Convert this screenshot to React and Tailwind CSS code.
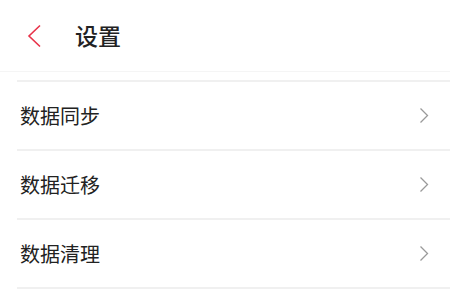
import React from 'react';

const items = ['数据同步', '数据迁移', '数据清理'];

const ChevronRight = () => (
  <svg width="10" height="17" viewBox="0 0 10 17" fill="none">
    <path d="M1.5 1.5 L8.5 8.5 L1.5 15.5" stroke="#9a9a9a" strokeWidth="1.3" />
  </svg>
);

export default function App() {
  return (
    <div
      className="w-[450px] h-[292px] bg-white overflow-hidden"
      style={{ fontFamily: '"Noto Sans CJK SC", "Noto Sans", sans-serif' }}
    >
      {/* Header */}
      <div className="h-[72px] flex items-center border-b border-[#f5f5f5]">
        <div className="w-[75px] flex items-center pl-[27px]">
          <svg width="15" height="24" viewBox="0 0 15 24" fill="none">
            <path d="M13 1.5 L2 12 L13 22.5" stroke="#e8334a" strokeWidth="1.6" />
          </svg>
        </div>
        <span className="text-[23px] leading-none font-medium text-[#222]">设置</span>
      </div>

      <div className="h-[8px]" />

      {/* List */}
      <div className="ml-[17px] border-t-2 border-[#f0f0f0]">
        {items.map((t) => (
          <div
            key={t}
            className="h-[69px] flex items-center justify-between pl-[3px] pr-[21px] border-b-2 border-[#f0f0f0]"
          >
            <span className="text-[20px] leading-none text-[#222]">{t}</span>
            <ChevronRight />
          </div>
        ))}
      </div>
    </div>
  );
}
